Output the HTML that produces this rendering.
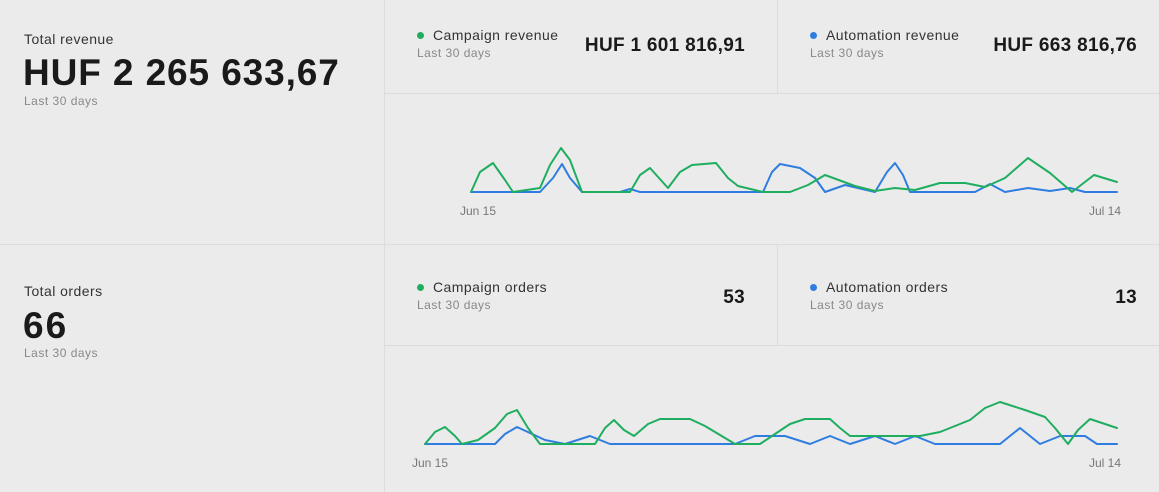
<!DOCTYPE html>
<html><head><meta charset="utf-8"><style>
body{margin:0;width:1159px;height:492px;background:#ebebeb;font-family:"Liberation Sans",sans-serif;color:#1a1a1a;position:relative;overflow:hidden}
.a{position:absolute}
.line{position:absolute;background:#dcdcdc}
.lbl{font-size:14px;color:#333;letter-spacing:0.45px}
.sub{font-size:12px;color:#888;letter-spacing:0.5px}
.dot{display:inline-block;width:7px;height:7px;border-radius:50%;margin-right:9px;vertical-align:1px}
.val{font-size:19px;font-weight:bold;color:#1a1a1a;letter-spacing:0.3px}
.ax{font-size:12px;color:#777}
.big{font-size:37px;font-weight:bold;letter-spacing:0.9px}
</style></head><body>
<div class="line" style="left:384px;top:0;width:1px;height:492px"></div>
<div class="line" style="left:0;top:244px;width:1159px;height:1px"></div>
<div class="line" style="left:385px;top:93px;width:774px;height:1px"></div>
<div class="line" style="left:385px;top:345px;width:774px;height:1px"></div>
<div class="line" style="left:777px;top:0;width:1px;height:93px"></div>
<div class="line" style="left:777px;top:245px;width:1px;height:100px"></div>

<div class="a lbl" style="left:24px;top:31px">Total revenue</div>
<div class="a big" style="left:23px;top:52px">HUF 2 265 633,67</div>
<div class="a sub" style="left:24px;top:94px">Last 30 days</div>

<div class="a lbl" style="left:24px;top:283px">Total orders</div>
<div class="a big" style="left:23px;top:305px;letter-spacing:2px">66</div>
<div class="a sub" style="left:24px;top:346px">Last 30 days</div>

<div class="a lbl" style="left:417px;top:27px"><span class="dot" style="background:#1fae5f"></span>Campaign revenue</div>
<div class="a sub" style="left:417px;top:46px">Last 30 days</div>
<div class="a val" style="right:414px;top:35px">HUF 1 601 816,91</div>
<div class="a lbl" style="left:810px;top:27px"><span class="dot" style="background:#2f7de1"></span>Automation revenue</div>
<div class="a sub" style="left:810px;top:46px">Last 30 days</div>
<div class="a val" style="right:22px;top:35px">HUF 663 816,76</div>

<div class="a lbl" style="left:417px;top:279px"><span class="dot" style="background:#1fae5f"></span>Campaign orders</div>
<div class="a sub" style="left:417px;top:298px">Last 30 days</div>
<div class="a val" style="right:414px;top:287px">53</div>
<div class="a lbl" style="left:810px;top:279px"><span class="dot" style="background:#2f7de1"></span>Automation orders</div>
<div class="a sub" style="left:810px;top:298px">Last 30 days</div>
<div class="a val" style="right:22px;top:287px">13</div>

<div class="a ax" style="left:460px;top:204px">Jun 15</div>
<div class="a ax" style="left:1089px;top:204px">Jul 14</div>
<div class="a ax" style="left:412px;top:456px">Jun 15</div>
<div class="a ax" style="left:1089px;top:456px">Jul 14</div>

<svg class="a" style="left:0;top:0" width="1159" height="492" fill="none" stroke-width="2" stroke-linejoin="round" stroke-linecap="round">
<polyline stroke="#2f7de1" points="471,192 540,192 553,178 562,164 570,178 582,192 620,192 630,189 640,192 763,192 772,172 780,164 800,168 815,178 825,192 845,185 875,192 887,172 895,163 903,175 910,192 975,192 990,184 1005,192 1028,188 1050,191 1070,188 1085,192 1117,192"/>
<polyline stroke="#1fae5f" points="471,192 480,172 493,163 505,180 513,192 540,188 550,165 561,148 570,160 582,192 630,192 640,175 650,168 668,188 680,172 692,165 716,163 728,178 738,186 763,192 790,192 808,185 825,175 855,186 875,191 895,188 915,190 940,183 965,183 985,187 1005,178 1028,158 1050,173 1072,192 1094,175 1117,182"/>
<polyline stroke="#2f7de1" points="425,444 495,444 505,434 517,427 530,433 545,440 565,444 590,436 610,444 735,444 755,436 785,436 810,444 830,436 850,444 875,436 895,444 915,436 935,444 1000,444 1020,428 1040,444 1060,436 1085,436 1097,444 1117,444"/>
<polyline stroke="#1fae5f" points="425,444 435,432 445,427 455,436 462,444 478,440 495,428 507,414 517,410 528,428 540,444 595,444 605,428 614,420 624,430 634,436 648,424 660,419 690,419 705,426 715,432 735,444 760,444 775,434 790,424 805,419 830,419 840,428 850,436 920,436 940,432 970,420 985,408 1000,402 1025,410 1045,417 1055,428 1068,444 1078,430 1090,419 1117,428"/>
</svg>
</body></html>
